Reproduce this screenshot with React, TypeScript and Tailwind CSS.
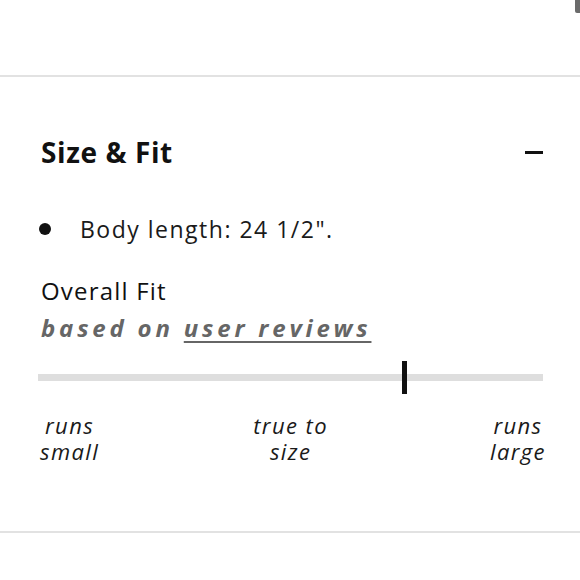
const FONT = "font-['Open_Sans','Noto_Sans',sans-serif]";

function FitScale({ position }: { position: number }) {
  return (
    <div className="mt-[31px]">
      <div className="relative h-[7px] bg-[#dedede]">
        <div
          className="absolute top-[-13px] h-[33px] w-[5px] bg-[#111]"
          style={{ left: `${position}%` }}
        />
      </div>
      <div className="ml-[2px] mr-[-3px] mt-[31px] flex justify-between text-[22px] italic leading-[26px] tracking-[1.4px] text-[#1a1a1a]">
        <div className="text-center">
          runs
          <br />
          small
        </div>
        <div className="mr-[8px] text-center">
          true to
          <br />
          size
        </div>
        <div className="text-center">
          runs
          <br />
          large
        </div>
      </div>
    </div>
  );
}

export default function App() {
  return (
    <div className={`relative h-[580px] w-[580px] overflow-hidden bg-white ${FONT}`}>
      {/* scrollbar sliver from the page above */}
      <div className="absolute right-0 top-0 h-[13px] w-[5px] rounded-bl-[2px] bg-[#6b6b6b]" />

      <div className="h-[75px]" />
      <div className="h-[2px] bg-[#e2e2e2]" />

      <section className="pl-[38px] pr-[37px]">
        <div className="mt-[58px] flex items-center justify-between">
          <h2 className="pl-[3px] text-[28px] font-bold leading-[34px] tracking-[0.6px] text-[#111]">
            Size &amp; Fit
          </h2>
          <div className="h-[3px] w-[18px] bg-[#111]" />
        </div>

        <ul className="mt-[45px]">
          <li className="flex items-center gap-[29px] text-[23px] leading-[30px] tracking-[1.5px] text-[#1a1a1a]">
            <span className="ml-[1px] h-[12px] w-[12px] rounded-full bg-[#111]" />
            Body length: 24 1/2".
          </li>
        </ul>

        <div className="mt-[32px] pl-[3px]">
          <p className="text-[24px] leading-[30px] tracking-[1.2px] text-[#111]">Overall Fit</p>
          <p className="mt-[7px] text-[24px] font-bold italic leading-[30px] tracking-[3.8px] text-[#666]">
            based on{" "}
            <a href="#" className="underline decoration-[2px] underline-offset-[4px]">
              user reviews
            </a>
          </p>
        </div>

        <FitScale position={72} />
      </section>

      <div className="mt-[67px] h-[2px] bg-[#e2e2e2]" />
    </div>
  );
}
